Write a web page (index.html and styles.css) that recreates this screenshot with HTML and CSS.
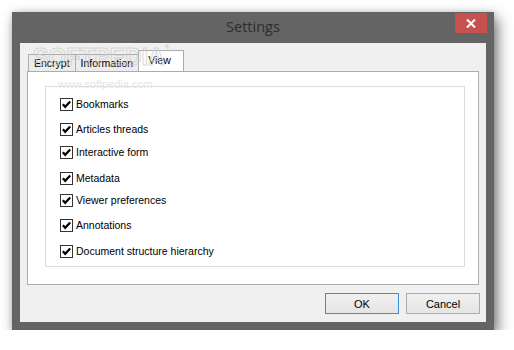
FILE: index.html
```
<!DOCTYPE html>
<html>
<head>
<meta charset="utf-8">
<title>Settings</title>
<link rel="stylesheet" href="styles.css">
</head>
<body>
<div class="window">
  <div class="titlebar">
    <span class="title">Settings</span>
    <div class="close">
      <svg width="10" height="9" viewBox="0 0 10 9"><path d="M1 0.5 L9 8.5 M9 0.5 L1 8.5" stroke="#fff" stroke-width="2" fill="none"/></svg>
    </div>
  </div>
  <div class="client">
    <div class="tabs">
      <div class="tab">Encrypt</div>
      <div class="tab">Information</div>
      <div class="tab active">View</div>
    </div>
    <div class="panel">
      <div class="group">
        <div class="row"><span class="cb"><svg width="13" height="13" viewBox="0 0 13 13"><path d="M2.8 6.3 L5.2 8.8 L10.2 3.4" stroke="#000" stroke-width="2.2" fill="none"/></svg></span><span class="lbl">Bookmarks</span></div>
        <div class="row"><span class="cb"><svg width="13" height="13" viewBox="0 0 13 13"><path d="M2.8 6.3 L5.2 8.8 L10.2 3.4" stroke="#000" stroke-width="2.2" fill="none"/></svg></span><span class="lbl">Articles threads</span></div>
        <div class="row"><span class="cb"><svg width="13" height="13" viewBox="0 0 13 13"><path d="M2.8 6.3 L5.2 8.8 L10.2 3.4" stroke="#000" stroke-width="2.2" fill="none"/></svg></span><span class="lbl">Interactive form</span></div>
        <div class="row"><span class="cb"><svg width="13" height="13" viewBox="0 0 13 13"><path d="M2.8 6.3 L5.2 8.8 L10.2 3.4" stroke="#000" stroke-width="2.2" fill="none"/></svg></span><span class="lbl">Metadata</span></div>
        <div class="row"><span class="cb"><svg width="13" height="13" viewBox="0 0 13 13"><path d="M2.8 6.3 L5.2 8.8 L10.2 3.4" stroke="#000" stroke-width="2.2" fill="none"/></svg></span><span class="lbl">Viewer preferences</span></div>
        <div class="row"><span class="cb"><svg width="13" height="13" viewBox="0 0 13 13"><path d="M2.8 6.3 L5.2 8.8 L10.2 3.4" stroke="#000" stroke-width="2.2" fill="none"/></svg></span><span class="lbl">Annotations</span></div>
        <div class="row"><span class="cb"><svg width="13" height="13" viewBox="0 0 13 13"><path d="M2.8 6.3 L5.2 8.8 L10.2 3.4" stroke="#000" stroke-width="2.2" fill="none"/></svg></span><span class="lbl">Document structure hierarchy</span></div>
      </div>
    </div>
    <div class="buttons">
      <div class="btn default">OK</div>
      <div class="btn">Cancel</div>
    </div>
  </div>
  <div class="wm-logo">SOFTPEDIA<sup>®</sup></div>
  <div class="wm-url">www.softpedia.com</div>
</div>
</body>
</html>
```
FILE: styles.css
```
html, body {
  margin: 0;
  padding: 0;
  background: #ffffff;
}
body {
  padding: 12px 0 0 12px;
  font-family: "Liberation Sans", Arial, sans-serif;
}
.window {
  position: relative;
  width: 482px;
  height: 318px;
  box-sizing: border-box;
  background: #646464;
  padding: 0 8px 8px 8px;
  box-shadow: 4px 6px 13px rgba(0, 0, 0, 0.5), 0 0 6px rgba(0, 0, 0, 0.15);
  display: flex;
  flex-direction: column;
}
.titlebar {
  height: 31px;
  display: grid;
  grid-template-columns: 1fr auto 1fr;
  align-items: center;
}
.title {
  grid-column: 2;
  font-family: "Open Sans", "Liberation Sans", sans-serif;
  font-size: 14.5px;
  color: #2e2e2e;
  padding-bottom: 2px;
}
.close {
  grid-column: 3;
  justify-self: end;
  align-self: start;
  margin-top: 1px;
  margin-right: -1px;
  width: 32px;
  height: 20px;
  background: #c75050;
  display: flex;
  align-items: center;
  justify-content: center;
}
.close svg { display: block; }
.client {
  flex: 1;
  background: #f0f0f0;
  display: flex;
  flex-direction: column;
  font-size: 10.5px;
  color: #000;
}
.tabs {
  display: flex;
  align-items: flex-end;
  height: 22px;
  margin-top: 7px;
  padding-left: 8px;
}
.tab {
  box-sizing: border-box;
  height: 17px;
  margin-bottom: 1px;
  padding: 2px 5px 0 5px;
  border: 1px solid #acacac;
  border-bottom: none;
  background: #ececec;
  line-height: 13px;
  white-space: nowrap;
}
.tab + .tab { margin-left: -1px; }
.tab.active {
  height: 22px;
  margin-bottom: 0;
  margin-left: -1px;
  padding: 3px 12px 0 9px;
  background: #ffffff;
  border-color: #acacac;
}
.panel {
  margin: -1px 7px 0 7px;
  height: 214px;
  box-sizing: border-box;
  border: 1px solid #acacac;
  background: #ffffff;
  padding: 14px 13px 0 17px;
}
.group {
  height: 181px;
  box-sizing: border-box;
  border: 1px solid #dcdcdc;
  padding: 6px 0 0 14px;
}
.row {
  height: 22px;
  display: flex;
  align-items: center;
}
.row:nth-child(2) { margin-top: 3px; }
.row:nth-child(3) { margin-top: 1px; }
.row:nth-child(4) { margin-top: 4px; }
.row:nth-child(5) { margin-top: 0; }
.row:nth-child(6) { margin-top: 3px; }
.row:nth-child(7) { margin-top: 4px; }
.cb {
  width: 13px;
  height: 13px;
  box-sizing: border-box;
  border: 1px solid #333333;
  background: #fff;
  overflow: hidden;
}
.cb svg {
  display: block;
  margin: -1px 0 0 -1px;
}
.lbl {
  margin-left: 3px;
  line-height: 13px;
}
.buttons {
  display: flex;
  justify-content: flex-end;
  gap: 7px;
  margin-top: 8px;
  margin-right: 6px;
}
.btn {
  width: 74px;
  height: 21px;
  box-sizing: border-box;
  border: 1px solid #acacac;
  background: linear-gradient(#f0f0f0, #e5e5e5);
  display: flex;
  align-items: center;
  justify-content: center;
  font-size: 11px;
}
.btn.default {
  border-color: #3c8fe0;
}
.wm-logo {
  position: absolute;
  left: 21px;
  top: 32px;
  font-size: 23px;
  font-weight: bold;
  color: transparent;
  -webkit-text-stroke: 1px rgba(205, 205, 205, 0.75);
  pointer-events: none;
}
.wm-logo sup {
  font-size: 6px;
  -webkit-text-stroke: 0;
  color: rgba(190, 190, 190, 0.8);
  vertical-align: top;
}
.wm-url {
  position: absolute;
  left: 46px;
  top: 66px;
  font-size: 11px;
  color: #e4e4e4;
  pointer-events: none;
}
```
